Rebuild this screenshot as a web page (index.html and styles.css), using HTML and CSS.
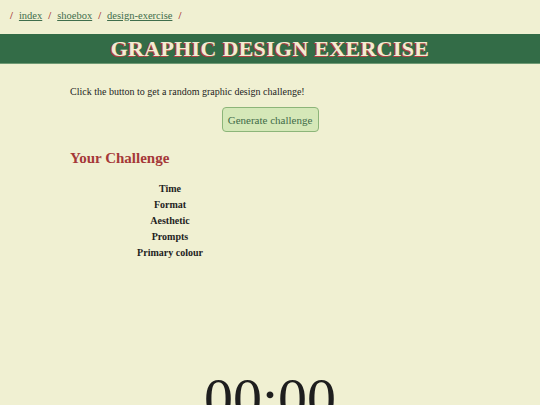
FILE: index.html
```html
<!DOCTYPE html>
<html>
<head>
<meta charset="utf-8">
<link rel="stylesheet" href="styles.css">
</head>
<body>
<nav class="crumbs">
  <span class="sep">/</span><a href="#">index</a><span class="sep">/</span><a href="#">shoebox</a><span class="sep">/</span><a href="#">design-exercise</a><span class="sep">/</span>
</nav>
<header class="banner"><h1>GRAPHIC DESIGN EXERCISE</h1></header>
<main class="content">
  <p class="intro">Click the button to get a random graphic design challenge!</p>
  <div class="actions"><button class="btn">Generate challenge</button></div>
  <h2 class="heading">Your Challenge</h2>
  <dl class="fields">
    <dt>Time</dt><dd></dd>
    <dt>Format</dt><dd></dd>
    <dt>Aesthetic</dt><dd></dd>
    <dt>Prompts</dt><dd></dd>
    <dt>Primary colour</dt><dd></dd>
  </dl>
  <div class="timer">00:00</div>
</main>
</body>
</html>
```
FILE: styles.css
```css
* { box-sizing: border-box; }
html, body { margin: 0; padding: 0; }
body {
  background: #f0f0d2;
  font-family: "Liberation Serif", "DejaVu Serif", serif;
  color: #1e1e1e;
  overflow: hidden;
  height: 405px;
}
.crumbs {
  padding: 10px 10px 0;
  height: 34px;
  font-size: 10.5px;
  display: flex;
  gap: 6px;
  align-items: baseline;
}
.crumbs a { color: #3f6e4c; text-decoration: underline; }
.crumbs .sep { color: #a83a3a; font-weight: bold; }
.banner {
  background: #336c47;
  height: 30px;
  border-bottom: 1px solid #6f9a74;
  display: flex;
  align-items: center;
  justify-content: center;
}
.banner h1 {
  margin: 0;
  font-size: 22px;
  font-weight: bold;
  color: #f2ecd2;
  text-shadow: -1.5px 1px 0 #b04040;
  letter-spacing: 0.3px;
}
.content { padding: 0 70px; }
.intro { margin: 22px 0 0; font-size: 10px; }
.actions { display: flex; justify-content: center; margin-top: 10px; }
.btn {
  font-family: inherit;
  font-size: 11px;
  color: #3f6b48;
  background: #d5e8b8;
  border: 1px solid #8cb579;
  border-radius: 4px;
  width: 97px;
  height: 25px;
  padding: 0;
}
.heading {
  margin: 18px 0 0;
  font-size: 15px;
  color: #a53838;
  font-weight: bold;
}
.fields {
  margin: 14px 0 0;
  display: grid;
  grid-template-columns: 200px 1fr;
  row-gap: 0;
  font-size: 10px;
  line-height: 16px;
}
.fields dt { font-weight: bold; text-align: center; }
.fields dd { margin: 0; }
.timer {
  margin-top: 109px;
  text-align: center;
  font-size: 58px;
  line-height: 1;
}
```
